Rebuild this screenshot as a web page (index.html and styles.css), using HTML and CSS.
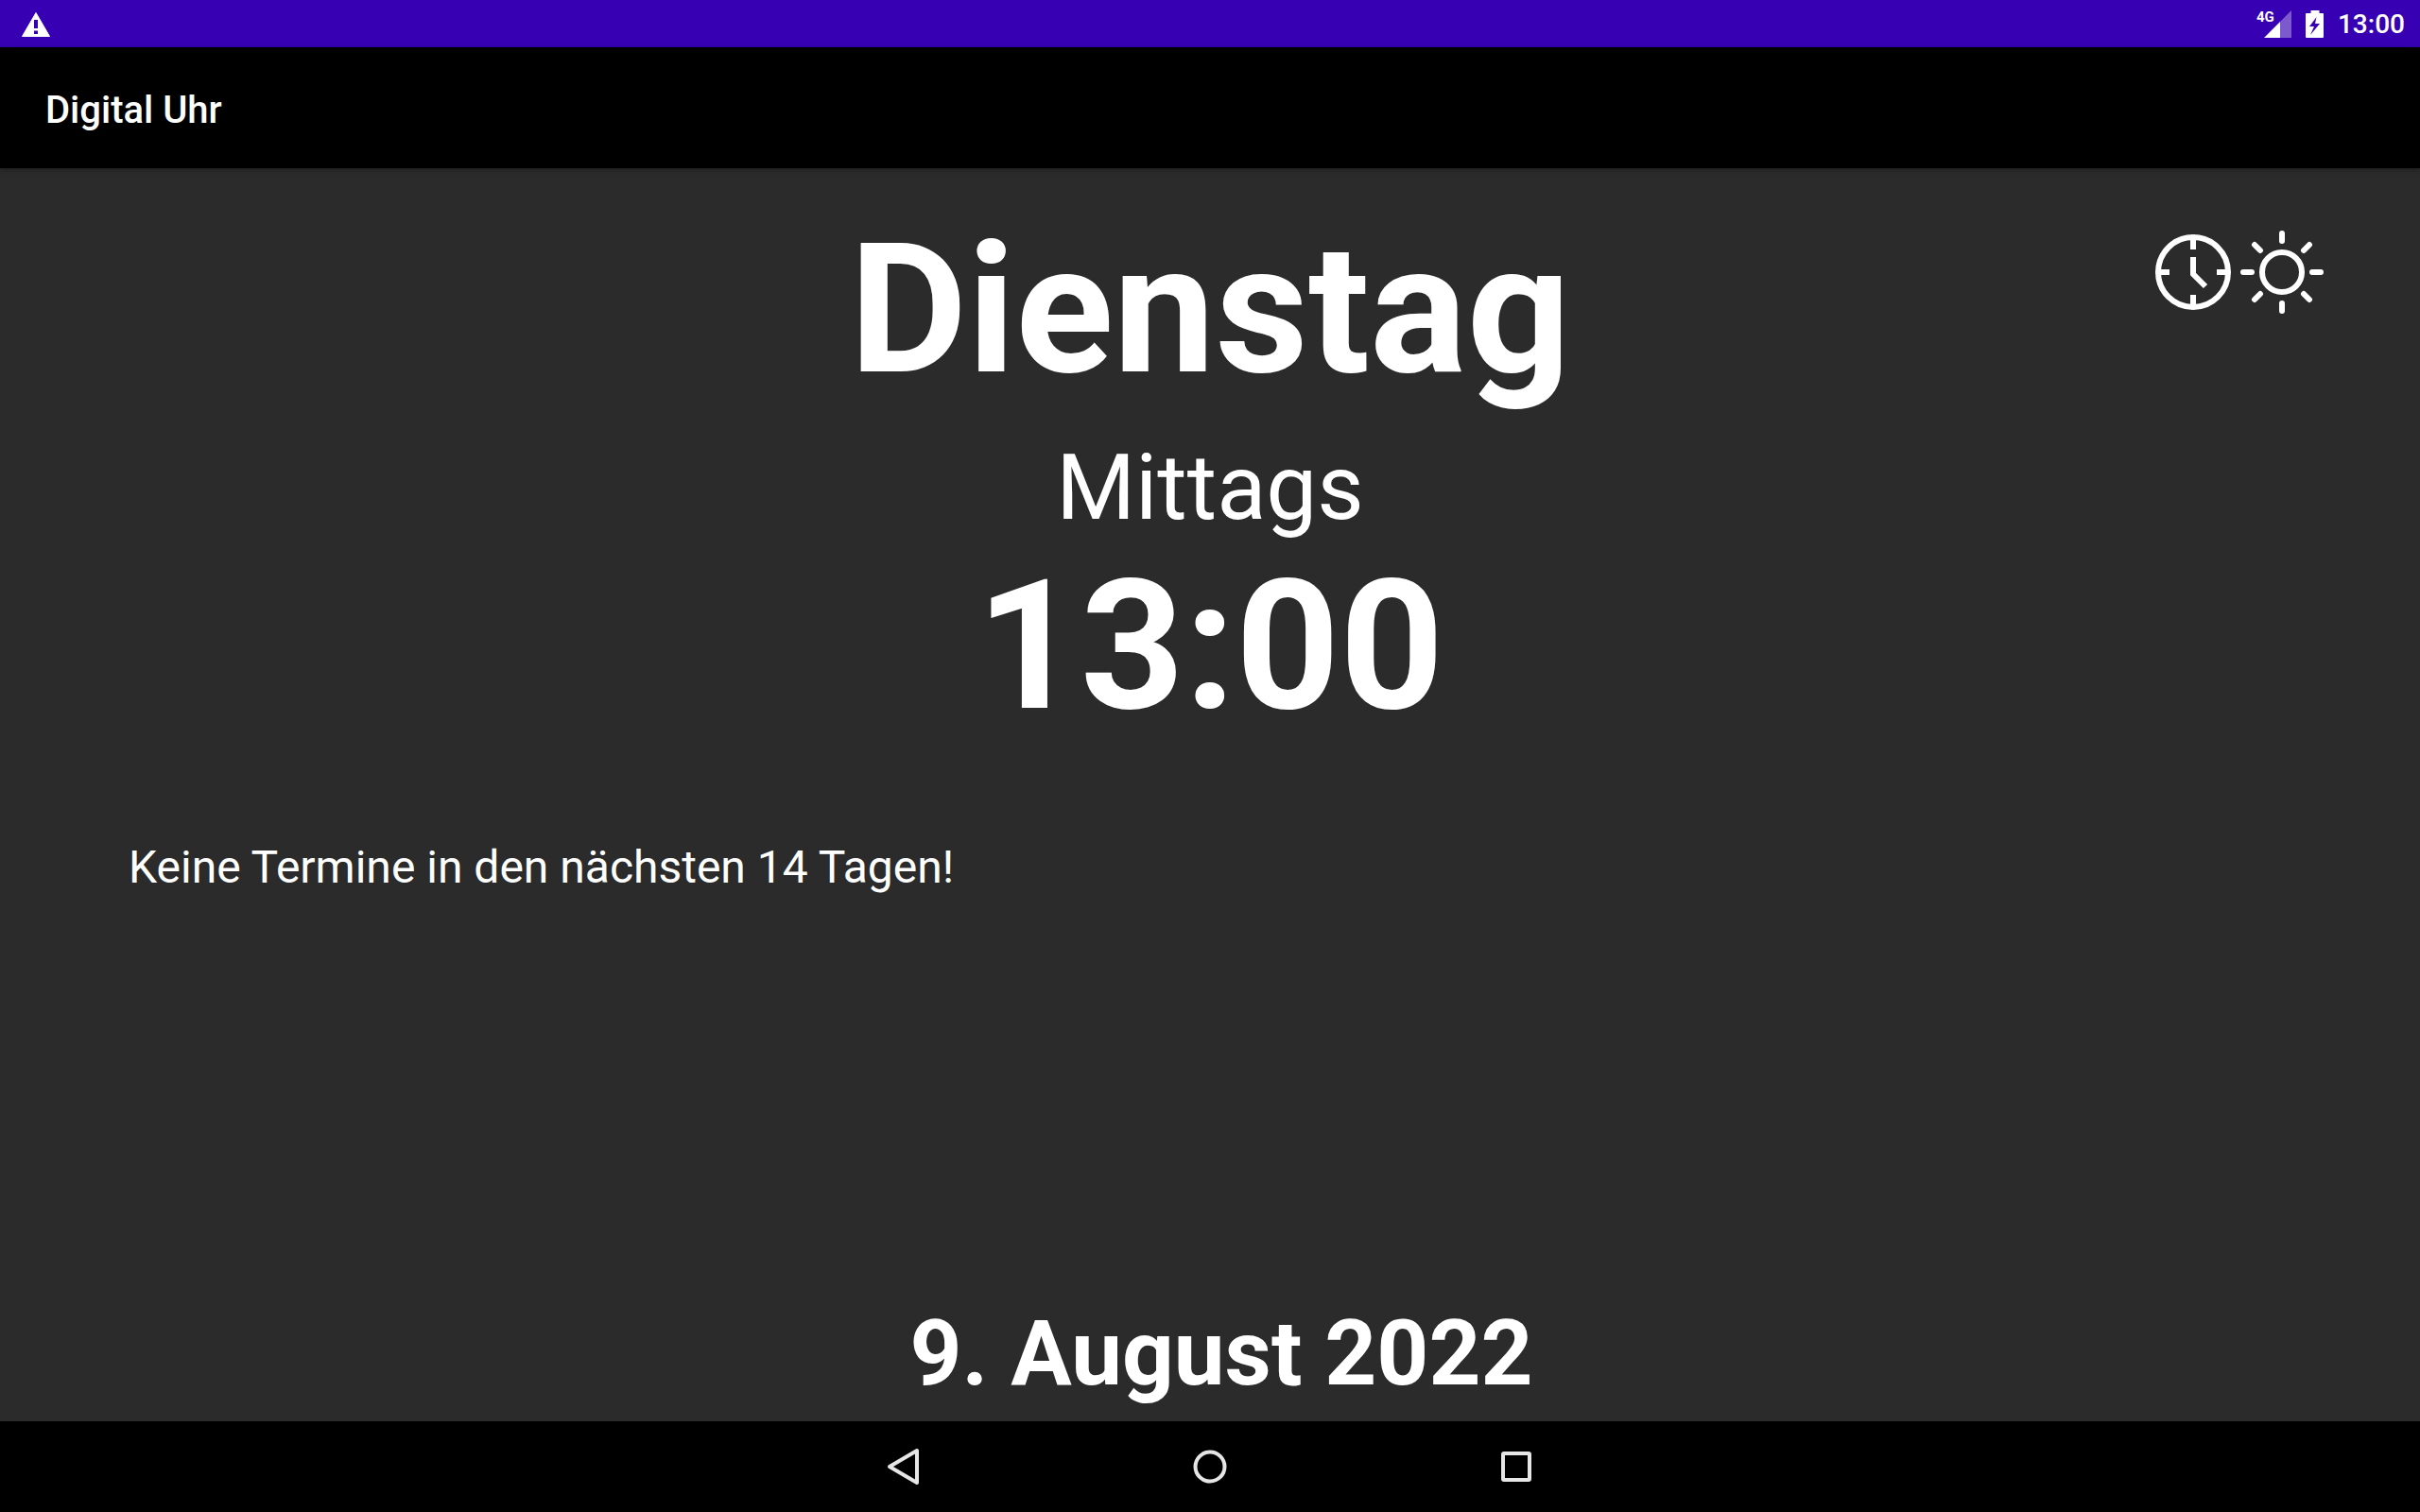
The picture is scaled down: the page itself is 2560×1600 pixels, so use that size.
FILE: index.html
```html
<!DOCTYPE html>
<html lang="de">
<head>
<meta charset="utf-8">
<meta name="viewport" content="width=device-width, initial-scale=1">
<title>Digital Uhr</title>
<link rel="stylesheet" href="styles.css">
</head>
<body>
<div class="status-bar">
  <svg class="warning-icon" viewBox="0 0 32 28" aria-hidden="true"><path fill="#fff" d="M16 1.500 30.500 26.500H1.500z" stroke="#fff" stroke-width="1" stroke-linejoin="round"/><path fill="#3700b3" d="M14 9h4v9h-4zM14 20.500h4V24h-4z"/></svg>
  <div class="status-group">
    <span class="signal">
      <span class="network">4G</span>
      <svg class="signal-icon" viewBox="0 0 30 30" aria-hidden="true"><path fill="#fff" fill-opacity=".35" d="M17 12 29 0v29H17z"/><path fill="#fff" d="M17 12v17H0z"/></svg>
    </span>
    <svg class="battery-icon" viewBox="0 0 20 30" aria-hidden="true"><path fill="#fff" d="M5.500 0h9v3H18a1 1 0 0 1 1 1v24a1 1 0 0 1-1 1H1a1 1 0 0 1-1-1V4a1 1 0 0 1 1-1h4.500z"/><path fill="#3700b3" d="M11.500 7 4 17h5L5 26l10-12h-5z"/></svg>
    <span class="status-time">13:00</span>
  </div>
</div>
<header class="app-bar"><h1 class="app-title">Digital Uhr</h1></header>
<main class="clock">
  <section class="now">
    <p class="weekday">Dienstag</p>
    <div class="actions">
      <button class="action" type="button" aria-label="Uhr">
        <svg viewBox="0 0 94 94" fill="none" stroke="#fff" stroke-width="6" aria-hidden="true"><circle cx="47" cy="47" r="37"/><path d="M47 10v13M47 71v13M10 47h12M72 47h12M47 31v18l13 13"/></svg>
      </button>
      <button class="action" type="button" aria-label="Helligkeit">
        <svg viewBox="0 0 94 94" fill="none" stroke="#fff" stroke-width="6" stroke-linecap="round" aria-hidden="true"><circle cx="47" cy="47" r="21"/><path d="M47 6v8M47 80v8M6 47h9M79 47h9M18 18l6 6M76 18l-6 6M18 76l6-6M76 76l-6-6"/></svg>
      </button>
    </div>
    <p class="daytime">Mittags</p>
    <p class="time">13:00</p>
  </section>
  <p class="appointments">Keine Termine in den nächsten 14 Tagen!</p>
  <p class="date">9. August 2022</p>
</main>
<nav class="nav-bar" aria-label="Systemnavigation">
  <button class="nav-button" type="button" aria-label="Zurück"><svg viewBox="0 0 48 48" aria-hidden="true"><path d="M38 7v34L9 24z"/></svg></button>
  <button class="nav-button" type="button" aria-label="Startseite"><svg viewBox="0 0 48 48" aria-hidden="true"><circle cx="24" cy="24" r="15.500"/></svg></button>
  <button class="nav-button" type="button" aria-label="Übersicht"><svg viewBox="0 0 48 48" aria-hidden="true"><rect x="10" y="10" width="28" height="28" rx="1"/></svg></button>
</nav>
</body>
</html>
```
FILE: styles.css
```css
* { box-sizing: border-box; }
body {
  margin: 0;
  min-height: 100vh;
  display: flex;
  flex-direction: column;
  background: #2b2b2b;
  color: #fff;
  font-family: Roboto, "Liberation Sans", sans-serif;
}
h1, p { margin: 0; }
button { padding: 0; border: 0; background: none; color: inherit; cursor: pointer; }
svg { display: block; }

.status-bar {
  height: 50px;
  padding: 2px 16px 0 22px;
  display: flex;
  align-items: center;
  justify-content: space-between;
  background: #3700b3;
}
.warning-icon { width: 32px; height: 28px; }
.status-group { display: flex; align-items: center; gap: 14px; }
.signal { display: flex; position: relative; padding-left: 8px; }
.signal-icon { width: 30px; height: 30px; }
.network {
  position: absolute;
  left: 0;
  top: 0;
  font-size: 15px;
  line-height: 14px;
  font-weight: 700;
}
.battery-icon { width: 20px; height: 30px; }
.status-time { font-size: 28px; line-height: 32px; font-weight: 500; }

.app-bar {
  height: 128px;
  padding: 6px 48px 0;
  display: flex;
  align-items: center;
  background: #000;
  box-shadow: 0 2px 6px rgba(0, 0, 0, .3);
}
.app-title { font-size: 40px; line-height: 48px; font-weight: 500; }

.clock {
  flex: 1;
  display: flex;
  flex-direction: column;
  padding: 38px 0 16px;
}
.now {
  display: grid;
  grid-template-columns: 1fr auto 1fr;
  justify-items: center;
}
.weekday, .time { grid-column: 2; font-size: 192px; line-height: 224px; font-weight: 700; }
.weekday { margin-bottom: 20px; }
.daytime { grid-column: 2; font-size: 96px; line-height: 112px; }
.actions {
  justify-self: end;
  display: flex;
  align-self: start;
  padding: 25px 99px 0 0;
}
.action svg { width: 94px; height: 94px; }
.appointments { margin-top: 94px; padding: 0 136px; font-size: 48px; line-height: 56px; }
.date {
  margin-top: auto;
  padding-left: 24px;
  text-align: center;
  font-size: 96px;
  line-height: 112px;
  font-weight: 700;
}

.nav-bar {
  height: 96px;
  display: flex;
  justify-content: center;
  align-items: center;
  gap: 164px;
  background: #000;
}
.nav-button { width: 160px; height: 96px; display: grid; place-items: center; }
.nav-button svg {
  width: 48px;
  height: 48px;
  fill: none;
  stroke: #e6e6e6;
  stroke-width: 4;
  stroke-linejoin: round;
}
```
